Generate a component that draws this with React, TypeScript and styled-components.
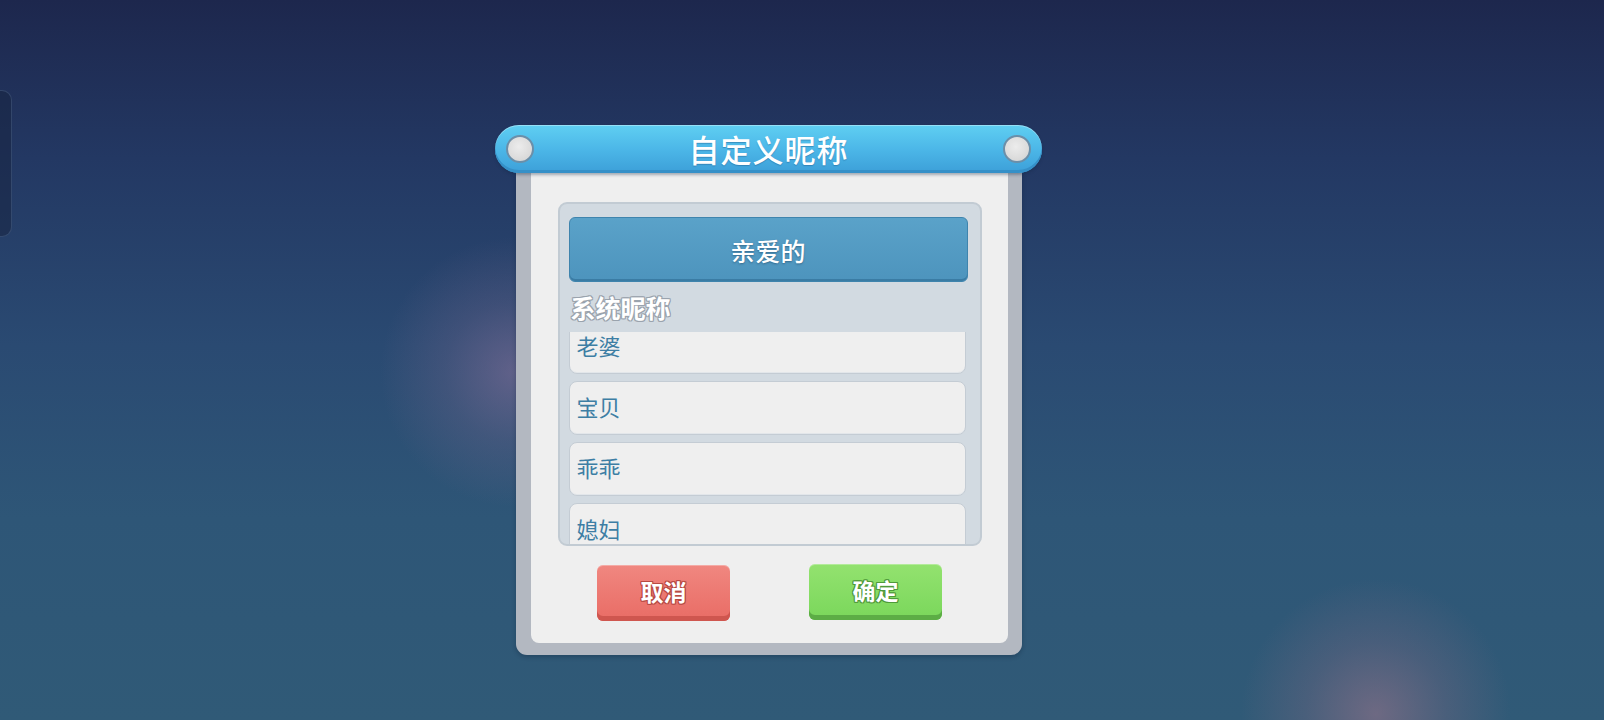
import React from 'react';
import styled, { createGlobalStyle } from 'styled-components';

const CJK = `"Noto Sans CJK SC", "Noto Sans", sans-serif`;

const GlobalStyle = createGlobalStyle`
  html, body {
    margin: 0;
    padding: 0;
    width: 1604px;
    height: 720px;
    overflow: hidden;
  }
  body {
    font-family: ${CJK};
  }
`;

const Page = styled.div`
  position: relative;
  width: 1604px;
  height: 720px;
  display: flex;
  align-items: flex-start;
  background:
    radial-gradient(circle at 515px 372px, rgba(150, 118, 160, 0.5) 0px, rgba(140, 110, 150, 0.22) 70px, rgba(130, 100, 140, 0) 135px),
    radial-gradient(circle at 1376px 714px, rgba(160, 118, 140, 0.55) 0px, rgba(150, 110, 135, 0.25) 70px, rgba(140, 100, 130, 0) 135px),
    linear-gradient(180deg, #1d274d 0%, #233863 22%, #2a4a72 48%, #2e5677 72%, #305a77 100%);
`;

const SideTab = styled.div`
  width: 11px;
  height: 145px;
  margin-top: 90px;
  border-radius: 0 10px 10px 0;
  background: rgba(24, 36, 66, 0.55);
  border: 1px solid rgba(120, 150, 190, 0.26);
  border-left: none;
  flex-shrink: 0;
`;

const Dialog = styled.div`
  margin-left: 483px;
  margin-top: 125px;
  width: 547px;
  display: flex;
  flex-direction: column;
  align-items: center;
`;

const Header = styled.div`
  position: relative;
  z-index: 2;
  width: 547px;
  height: 48px;
  box-sizing: border-box;
  border-radius: 24px;
  background: linear-gradient(180deg, #5fcff2 0%, #4cb7e8 50%, #3c9fd8 100%);
  box-shadow: inset 0 -3px 0 #3590c8, inset 0 1px 0 rgba(255, 255, 255, 0.35), 0 2px 3px rgba(20, 40, 70, 0.35);
  display: flex;
  align-items: center;
  justify-content: space-between;
  padding: 0 11px;
`;

const Rivet = styled.div`
  width: 28px;
  height: 28px;
  box-sizing: border-box;
  border-radius: 50%;
  border: 2.5px solid #6b8fa9;
  background: radial-gradient(circle at 45% 40%, #ececec 0%, #dcdcdc 60%, #cfcfcf 100%);
`;

const Title = styled.div`
  color: #ffffff;
  font-family: ${CJK};
  font-size: 31px;
  font-weight: 500;
  line-height: 48px;
  letter-spacing: 1px;
  text-shadow: 0 1px 1px rgba(30, 90, 140, 0.45);
`;

const Frame = styled.div`
  width: 506px;
  margin-top: -1px;
  box-sizing: border-box;
  background: #b3b8c1;
  border-radius: 0 0 11px 11px;
  padding: 0 14px 12px 15px;
  box-shadow: 0 2px 4px rgba(10, 25, 50, 0.3);
`;

const Sheet = styled.div`
  background: #efefef;
  border-radius: 0 0 8px 8px;
  padding: 30px 26px 22px 27px;
  display: flex;
  flex-direction: column;
`;

const ListBox = styled.div`
  height: 344px;
  box-sizing: border-box;
  background: #d2dae1;
  border: 2px solid #c2cbd3;
  border-radius: 9px;
  padding: 13px 12px 0 9px;
  display: flex;
  flex-direction: column;
  overflow: hidden;
`;

const Selected = styled.div`
  height: 65px;
  flex-shrink: 0;
  box-sizing: border-box;
  border-radius: 6px;
  background: linear-gradient(180deg, #5aa2c9 0%, #4d94bd 100%);
  border: 1px solid #3f84ad;
  box-shadow: inset 0 -2px 0 rgba(40, 100, 140, 0.5);
  display: flex;
  align-items: center;
  justify-content: center;
  color: #ffffff;
  font-family: ${CJK};
  font-size: 25px;
  font-weight: 500;
  text-shadow: 0 1px 2px rgba(30, 70, 100, 0.55);
`;

const SectionLabel = styled.div`
  height: 50px;
  flex-shrink: 0;
  display: flex;
  align-items: center;
  padding-left: 2px;
  color: #ffffff;
  font-family: ${CJK};
  font-size: 25px;
  font-weight: 700;
  text-shadow:
    1px 0 0 #9aa3ad, -1px 0 0 #9aa3ad, 0 1px 0 #9aa3ad, 0 -1px 0 #9aa3ad,
    1px 1px 0 #9aa3ad, -1px -1px 0 #9aa3ad, 1px -1px 0 #9aa3ad, -1px 1px 0 #9aa3ad;
`;

const ScrollArea = styled.div`
  flex: 1;
  overflow: hidden;
`;

const ItemList = styled.div`
  margin-top: -12px;
  display: flex;
  flex-direction: column;
  gap: 7px;
  padding-right: 2px;
`;

const Item = styled.div`
  height: 54px;
  flex-shrink: 0;
  box-sizing: border-box;
  background: #efefef;
  border: 1.5px solid #c4ccd4;
  border-radius: 8px;
  box-shadow: inset 0 -1px 0 #e2e6ea;
  display: flex;
  align-items: center;
  padding: 0 0 4px 7px;
  color: #3d7ea4;
  font-family: ${CJK};
  font-size: 22px;
  line-height: 24px;
  font-weight: 400;
`;

const ButtonRow = styled.div`
  display: flex;
  justify-content: center;
  align-items: flex-start;
  gap: 79px;
  margin-top: 19px;
`;

const GameButton = styled.div<{ $top: string; $bottom: string; $edge: string; $ink: string; $lift?: number }>`
  width: 133px;
  height: 56px;
  margin-top: ${(p) => -(p.$lift ?? 0)}px;
  box-sizing: border-box;
  border-radius: 6px;
  background: linear-gradient(180deg, ${(p) => p.$top} 0%, ${(p) => p.$bottom} 100%);
  box-shadow: inset 0 -5px 0 ${(p) => p.$edge}, inset 0 1px 0 rgba(255, 255, 255, 0.3);
  display: flex;
  align-items: center;
  justify-content: center;
  padding-bottom: 5px;
  color: #ffffff;
  font-family: ${CJK};
  font-size: 23px;
  font-weight: 700;
  text-shadow:
    1px 0 0 ${(p) => p.$ink}, -1px 0 0 ${(p) => p.$ink}, 0 1px 0 ${(p) => p.$ink}, 0 -1px 0 ${(p) => p.$ink},
    1px 1px 0 ${(p) => p.$ink}, -1px -1px 0 ${(p) => p.$ink}, 1px -1px 0 ${(p) => p.$ink}, -1px 1px 0 ${(p) => p.$ink};
`;

const nicknames = ['老婆', '宝贝', '乖乖', '媳妇'];

export default function App() {
  return (
    <>
      <GlobalStyle />
      <Page>
        <SideTab />
        <Dialog>
          <Header>
            <Rivet />
            <Title>自定义昵称</Title>
            <Rivet />
          </Header>
          <Frame>
            <Sheet>
              <ListBox>
                <Selected>亲爱的</Selected>
                <SectionLabel>系统昵称</SectionLabel>
                <ScrollArea>
                  <ItemList>
                    {nicknames.map((name) => (
                      <Item key={name}>{name}</Item>
                    ))}
                  </ItemList>
                </ScrollArea>
              </ListBox>
              <ButtonRow>
                <GameButton $top="#f08780" $bottom="#e96c65" $edge="#cf564f" $ink="#b84a43">
                  取消
                </GameButton>
                <GameButton $top="#93e26f" $bottom="#7ad75b" $edge="#5cad45" $ink="#4f9a3a" $lift={1}>
                  确定
                </GameButton>
              </ButtonRow>
            </Sheet>
          </Frame>
        </Dialog>
      </Page>
    </>
  );
}
